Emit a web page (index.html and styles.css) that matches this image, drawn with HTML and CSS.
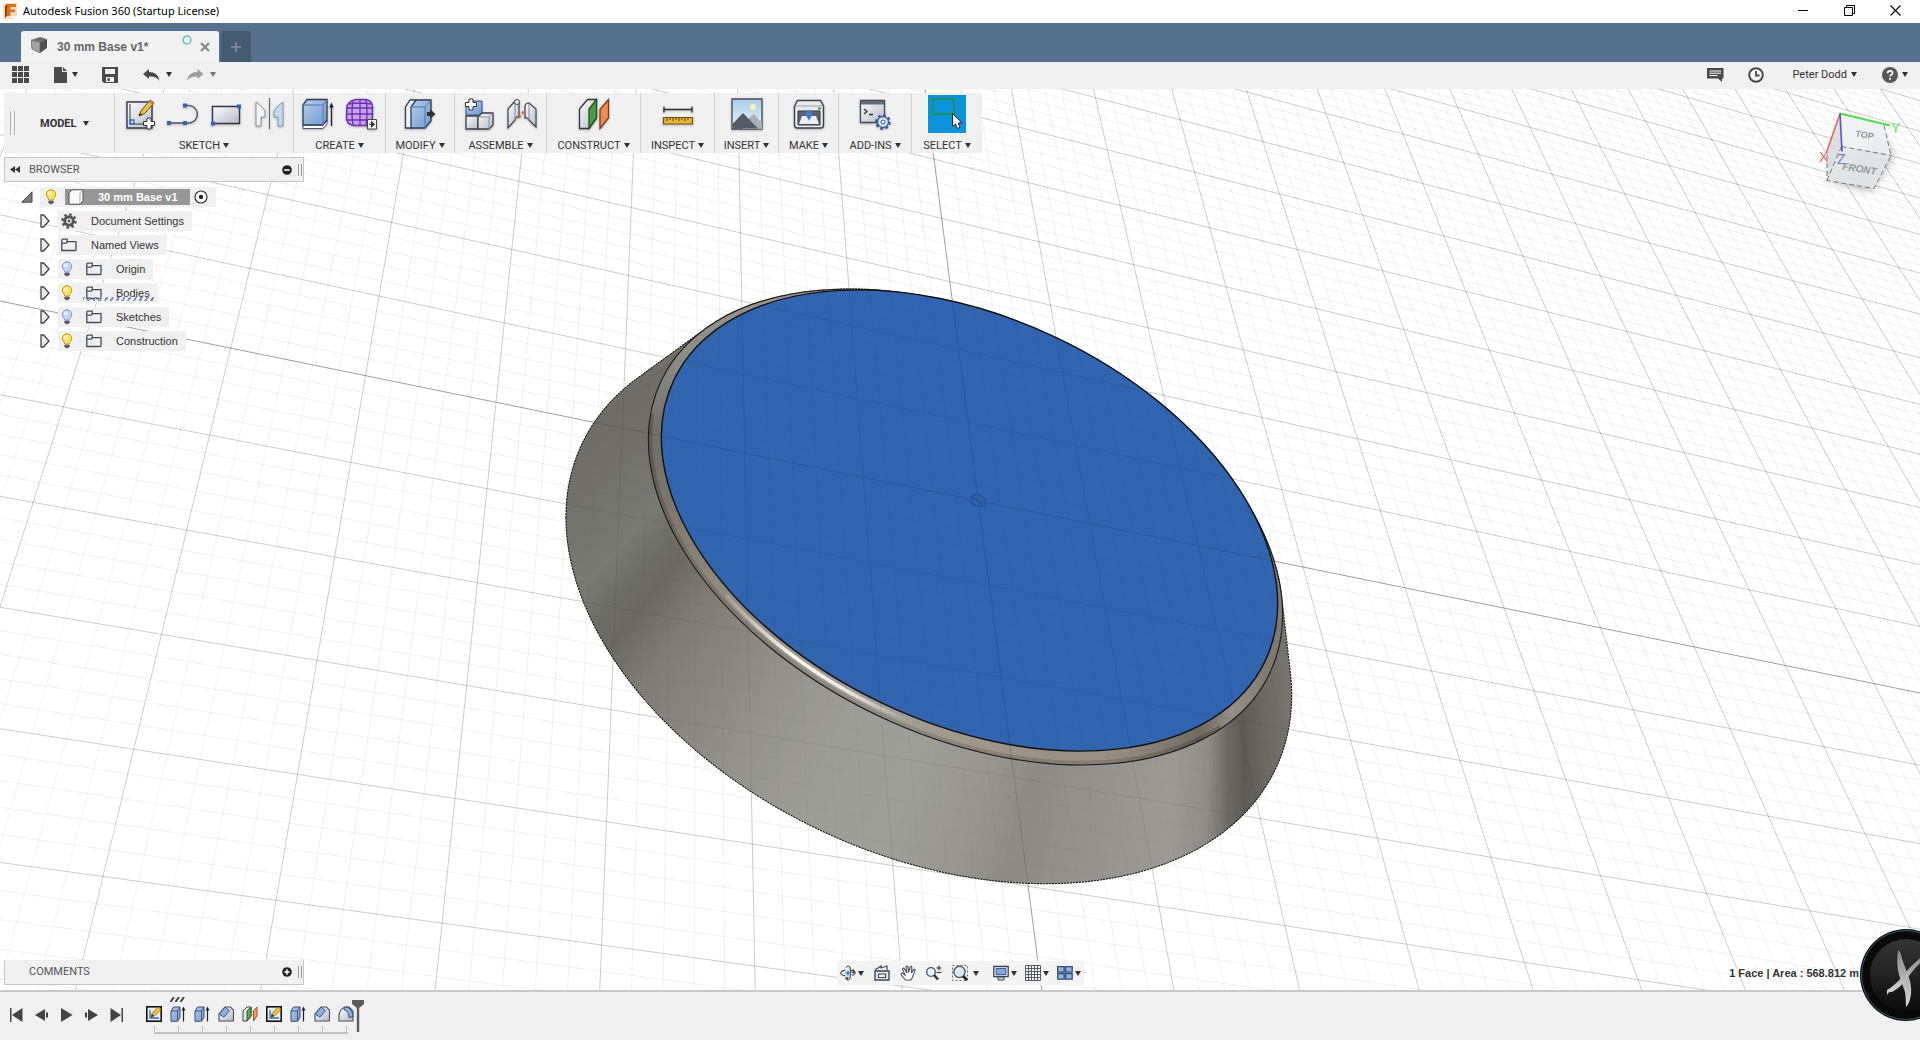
FILE: index.html
```html
<!DOCTYPE html>
<html lang="en">
<head>
<meta charset="utf-8">
<title>Autodesk Fusion 360 (Startup License)</title>
<link rel="stylesheet" href="styles.css">
</head>
<body>
<svg class="defs" aria-hidden="true">
  <defs>
    <linearGradient id="gBlue" x1="0" y1="0" x2="1" y2="1"><stop offset="0" stop-color="#b5cdec"/><stop offset="1" stop-color="#6f9bd1"/></linearGradient>
    <linearGradient id="gGrey" x1="0" y1="0" x2="1" y2="1"><stop offset="0" stop-color="#fdfdfe"/><stop offset="1" stop-color="#b4bac6"/></linearGradient>
    <linearGradient id="gSky" x1="0" y1="0" x2="0" y2="1"><stop offset="0" stop-color="#a9cdea"/><stop offset="1" stop-color="#eaf3f8"/></linearGradient>
    <linearGradient id="gDisc" x1="0" y1="0" x2="0" y2="1"><stop offset="0" stop-color="#343434"/><stop offset=".5" stop-color="#222"/><stop offset="1" stop-color="#0c0c0c"/></linearGradient>
    <linearGradient id="gX" x1="0" y1="0" x2="0" y2="1"><stop offset="0" stop-color="#8a8a8a"/><stop offset="1" stop-color="#d8d8d8"/></linearGradient>
    <symbol id="folder" viewBox="0 0 16 14"><path d="M.8 12.5V2.2q0-1 1-1h4.400v2.400H15v8.100q0 .8-.8.8z" fill="#eef0f4" stroke="#4a4d55" stroke-width="1.300"/><path d="M.8 5.200h4.600l1.200-1.600" fill="none" stroke="#4a4d55" stroke-width="1.200"/></symbol>
    <symbol id="bulbOn" viewBox="0 0 12 16"><path d="M6 .7a4.700 4.700 0 0 0-4.700 4.700C1.300 8 3.500 8.600 3.700 11h4.600C8.500 8.600 10.700 8 10.700 5.400A4.700 4.700 0 0 0 6 .7z" fill="#fbe25a" stroke="#b99a2c"/><circle cx="4.800" cy="4.600" r="1.800" fill="#fff6b8"/><path d="M3.800 12.200h4.400v1.600q-2.200 2.200-4.400 0z" fill="#5c6474" stroke="#3b4150" stroke-width=".8"/></symbol>
    <symbol id="bulbOff" viewBox="0 0 12 16"><path d="M6 .7a4.700 4.700 0 0 0-4.700 4.700C1.300 8 3.500 8.600 3.700 11h4.600C8.500 8.600 10.700 8 10.700 5.400A4.700 4.700 0 0 0 6 .7z" fill="#c5d6f2" stroke="#8499c4"/><circle cx="4.800" cy="4.600" r="1.800" fill="#edf3fd"/><path d="M3.800 12.200h4.400v1.600q-2.200 2.200-4.400 0z" fill="#5c6474" stroke="#3b4150" stroke-width=".8"/></symbol>
    <symbol id="twist" viewBox="0 0 10 14"><path d="M1 1h2.600L9 7l-5.400 6H1z" fill="#e9e9e9" stroke="#444" stroke-width="1.300"/></symbol>
    <symbol id="tSketch" viewBox="0 0 16 16"><rect x=".8" y=".8" width="14.400" height="14.400" fill="#e6f0fa" stroke="#111" stroke-width="1.600"/><path d="M4 4v8h9" fill="none" stroke="#3d6ea8" stroke-width="1.300"/><path d="M5 11l1-3.500 6-6.500 3 2.500-6.500 6.500z" fill="#f6c52e" stroke="#8a6a10" stroke-width=".8"/><path d="M5 11l1-3 2 2z" fill="#222"/></symbol>
    <symbol id="tExtrude" viewBox="0 0 16 16"><path d="M1 5l2.500-4H10v10.500L7.500 15.300H1z" fill="url(#gBlue)" stroke="#3f4f68"/><path d="M1 5h6.500L10 1M7.500 5v10" fill="none" stroke="#3f4f68" stroke-width=".9"/><path d="M13.500 15.500V3" stroke="#222" stroke-width="1.200"/><path d="M13.500 .5l2 4h-4z" fill="#222"/></symbol>
    <symbol id="tChamfer" viewBox="0 0 16 16"><path d="M1 15V8l6-7h5.500l3 3v11z" fill="url(#gGrey)" stroke="#4b4f5a" stroke-width="1.100"/><path d="M1.200 8L7 1.200l4.500 3.500L6 11z" fill="#8db2e2" stroke="#3c5376"/></symbol>
    <symbol id="tFillet" viewBox="0 0 16 16"><path d="M1 15V9q1-7 7-8h3l4 4v10z" fill="url(#gGrey)" stroke="#4b4f5a" stroke-width="1.100"/><path d="M6 1.200Q8 .5 10 1.500q5 3 5 9l-4 1q0-6-5-8z" fill="#8db2e2" stroke="#2f4566"/></symbol>
    <symbol id="tPlane" viewBox="0 0 16 16"><path d="M1 5l4-4h4v9l-4 5H1z" fill="#e4e7ec" stroke="#3d4350"/><path d="M5 5l4-4v9l-4 5z" fill="#5ea54e" stroke="#2d5a25"/><path d="M11.500 5l3.500-4v9l-3.500 5z" fill="#f29a63" stroke="#a2542a"/></symbol>
  </defs>
</svg>

<div class="app">
  <header class="titlebar">
    <svg class="app-icon" viewBox="0 0 14 16"><path d="M0 1l3-1h11v12l-3 4H0z" fill="#f9d9b8"/><path d="M4 1h9v3H7.500v2.500H12V9H7.500v4H4z" fill="#d9731f"/><path d="M4 1L2 3v12l2-2z" fill="#8a4210"/><path d="M8 13h4v2H7z" fill="#fff"/></svg>
    <h1 class="app-title">Autodesk Fusion 360 (Startup License)</h1>
    <div class="win-controls">
      <button type="button" aria-label="Minimize"><svg viewBox="0 0 11 11"><path d="M0 5.500h10" stroke="#000"/></svg></button>
      <button type="button" aria-label="Restore"><svg viewBox="0 0 11 11"><path d="M.5 2.500h8v8h-8zM2.500 2.500v-2h8v8h-2" fill="none" stroke="#000"/></svg></button>
      <button type="button" aria-label="Close"><svg viewBox="0 0 11 11"><path d="M.5.5l10 10m0-10l-10 10" stroke="#000" stroke-width="1.100"/></svg></button>
    </div>
  </header>

  <nav class="tabs" aria-label="Documents">
    <div class="tab">
      <svg class="tab-cube" viewBox="0 0 16 16"><path d="M0 3l9-3 7 2-7 3z" fill="#6d6d6d"/><path d="M0 3l9 2v11l-8-4z" fill="#a3a3a3"/><path d="M9 5l7-3v9l-7 5z" fill="#4f4f4f"/><path d="M0 3l9 2v11l-8-4z" fill="none" stroke="#666" stroke-width=".8"/></svg>
      <span class="tab-name">30 mm Base v1*</span>
      <svg class="tab-dot" viewBox="0 0 10 10"><circle cx="5" cy="5" r="4" fill="none" stroke="#5cc3b0" stroke-width="1.300"/></svg>
      <button type="button" class="tab-close" aria-label="Close tab"><svg viewBox="0 0 10 10"><path d="M1 1l8 8m0-8L1 9" stroke="#8b8b8b" stroke-width="2.400"/></svg></button>
    </div>
    <button type="button" class="tab-new" aria-label="New tab"><svg viewBox="0 0 12 12"><path d="M6 1v10M1 6h10" stroke="#8391a0" stroke-width="1.600"/></svg></button>
  </nav>

  <div class="quickbar">
    <div class="quick-left">
      <button type="button" aria-label="Data panel"><svg width="17" height="17" viewBox="0 0 17 17"><path d="M0 0h5v5H0zM6 0h5v5H6zM12 0h5v5h-5zM0 6h5v5H0zM6 6h5v5H6zM12 6h5v5h-5zM0 12h5v5H0zM6 12h5v5H6zM12 12h5v5h-5z" fill="#4a4a4a"/></svg></button>
      <button type="button" class="menu q-file" aria-label="File"><svg width="14" height="16" viewBox="0 0 14 16"><path d="M0 0h8v5h5v11H0z" fill="#4a4a4a"/><path d="M9 0l4 4H9z" fill="#4a4a4a"/></svg></button>
      <button type="button" class="q-save" aria-label="Save"><svg width="16" height="16" viewBox="0 0 16 16"><path d="M0 0h16v16H2l-2-2z" fill="#4a4a4a"/><path d="M3 2h10v5H3zM4 10h8v5H4z" fill="#f0f0f0"/><path d="M5.500 11h2.200v3H5.500z" fill="#4a4a4a"/></svg></button>
      <button type="button" class="menu q-undo" aria-label="Undo"><svg width="17" height="12" viewBox="0 0 17 12"><path d="M0 5l6-5v3q9 0 10.500 8.500Q13 7 6 7.500V10z" fill="#4a4a4a"/></svg></button>
      <button type="button" class="menu q-redo" aria-label="Redo"><svg width="17" height="12" viewBox="0 0 17 12"><path d="M16.500 5l-6-5v3Q1.500 3 0 11.500 3.500 7 10.500 7.500V10z" fill="#9c9c9c"/></svg></button>
    </div>
    <div class="quick-right">
      <button type="button" aria-label="Notifications"><svg width="17" height="14" viewBox="0 0 17 14"><path d="M0 0h16.500v10.500H15V14l-4-3.500H0z" fill="#4a4a4a"/><path d="M2.500 3h11.500M2.500 5.200h11.500M2.500 7.500h8" stroke="#fff" stroke-width="1"/></svg></button>
      <button type="button" class="q-clock" aria-label="Job status"><svg width="16" height="16" viewBox="0 0 16 16"><circle cx="8" cy="8" r="6.800" fill="#f7f7f7" stroke="#4a4a4a" stroke-width="2"/><path d="M8 4v4.500h3.500" fill="none" stroke="#4a4a4a" stroke-width="1.800"/></svg></button>
      <button type="button" class="menu q-user">Peter Dodd</button>
      <button type="button" class="menu q-help" aria-label="Help"><svg width="16" height="16" viewBox="0 0 16 16"><circle cx="8" cy="8" r="8" fill="#595959"/><path d="M5.600 6.200q0-2.400 2.500-2.400 2.400 0 2.400 2.100 0 1.200-1.300 2-1.100.6-1.100 1.700" fill="none" stroke="#fff" stroke-width="1.700"/><path d="M7.200 11h1.800v1.800H7.200z" fill="#fff"/></svg></button>
    </div>
  </div>

  <main class="viewport">
    <svg class="scene" viewBox="0 89 1920 902" preserveAspectRatio="xMidYMid slice" role="img" aria-label="Model view">
      <defs>
        <g id="grid"><path id="minor" class="g-minor"/><path id="major" class="g-major"/><path id="axes" class="g-axis"/></g>
        <clipPath id="solidClip"><path id="clipHull"/></clipPath>
      </defs>
      <use href="#grid"/>
      <path id="hull" fill="#77756e"/>
      <g id="wall"></g>
      <path id="hullEdge" class="edge dotted"/>
      <ellipse cx="965.500" cy="527.500" rx="337.600" ry="208" transform="rotate(25.800 965.500 527.500)" fill="#8f8d86"/>
      <g id="rim"></g>
      <ellipse cx="965.500" cy="527.500" rx="337.600" ry="208" transform="rotate(25.800 965.500 527.500)" class="edge"/>
      <ellipse cx="969.500" cy="521" rx="327.300" ry="202.500" transform="rotate(25.400 969.500 521)" fill="#3265af" stroke="#111" stroke-width="1.400"/>
      <g clip-path="url(#solidClip)" opacity=".34"><use href="#grid"/></g>
      <g fill="none" stroke="#28569c" stroke-width="2.500"><ellipse cx="978" cy="501" rx="7.500" ry="5.500" transform="rotate(20 978 501)"/><path d="M972 497l11 8"/></g>
      <g class="viewcube">
        <path d="M1828 181l43 10 22-34-12-24z" fill="#000" opacity=".3" filter="blur(5px)"/>
        <path d="M1840 114l44 12 7 30-50-9z" fill="#f0f1f3" opacity=".92"/>
        <path d="M1841.500 147l50 9-17 33-47-8z" fill="#e4e5e7" opacity=".95"/>
        <path d="M1840 114l1.500 33-14.500 34V153z" fill="#d8d9dc" opacity=".85"/>
        <path d="M1884 126l7 30-17 33-47-8v-26M1841.500 147l50 9M1841.500 147l-14.500 34" fill="none" stroke="#777" stroke-dasharray="5 3"/>
        <path d="M1840 114l50 12" stroke="#4be04b" stroke-width="2"/>
        <path d="M1840 114l-13.500 39" stroke="#e06a6a" stroke-width="1.600"/>
        <path d="M1840 114l2 38" stroke="#5656c8" stroke-width="1.600"/>
        <text transform="translate(1855 137) rotate(9)" class="cube-t">TOP</text>
        <text transform="translate(1842 170) rotate(9)" class="cube-f">FRONT</text>
        <text x="1891" y="133" class="ax ax-y">Y</text>
        <text x="1819" y="162" class="ax ax-x">X</text>
        <text x="1837" y="164" class="ax ax-z">Z</text>
      </g>
    </svg>

    <div class="overlay">
      <div class="top-left">
        <div class="ribbon">
          <div class="workspace"><i class="grip"></i><button type="button" class="menu ws-btn">MODEL</button></div>
          <section class="group g-sketch">
            <div class="icons">
              <svg viewBox="0 0 32 32"><path d="M3 4h25v26H3z" fill="url(#gGrey)" stroke="#333a46" stroke-width="1.400"/><path d="M6 6v20h18" fill="none" stroke="#333a46"/><path d="M6 22h4v4H6z" fill="none" stroke="#2d6fc0" stroke-width="1.300"/><path d="M15 18l2-5L26 2l4 3-9.500 10.500z" fill="#f4c33c" stroke="#5d4a1c"/><path d="M24.500 4l4 3L30 5l-4-3z" fill="#d77a45"/><path d="M15 18l1-3 2 2z" fill="#222"/><path d="M23 20h4v3.500h3.500v4H27V31h-4v-3.500h-3.500v-4H23z" fill="#fff" stroke="#333"/></svg>
              <svg viewBox="0 0 32 32"><path d="M2 25h21a8.700 8.700 0 0 0-3-17.500" fill="none" stroke="#4c5260" stroke-width="1.400"/><path d="M0 23h4v4H0zM16 23h4v4h-4zM16 5.500h4v4h-4z" fill="#3b5fc0"/></svg>
              <svg viewBox="0 0 32 32"><path d="M2.500 8.500h27v17h-27z" fill="url(#gGrey)" stroke="#333a46" stroke-width="1.400"/><path d="M1 23.500h4v4H1zM27 6.500h4v4h-4z" fill="#3b5fc0"/></svg>
              <svg viewBox="0 0 32 32"><path d="M16.500 0v31" stroke="#5a5f6a"/><path d="M3 4l5 4 4 5v6H8v9H3z" fill="#f1f2f4" stroke="#8b9099"/><path d="M30 4l-5 4-4 5v6h4v9h5z" fill="#c5d9ee" stroke="#7f96b3"/></svg>
            </div>
            <button type="button" class="menu label">SKETCH</button>
          </section>
          <section class="group g-create">
            <div class="icons">
              <svg viewBox="0 0 32 32"><path d="M1 27h20l4-5v4l-4 4.500H1z" fill="#fff" stroke="#50596a"/><path d="M1 7l4-5.500h20V22l-4 5H1z" fill="url(#gBlue)" stroke="#2f3d55" stroke-width="1.300"/><path d="M1 7h20l4-5.500M21 7v20" fill="none" stroke="#5577a5"/><path d="M29.500 28V7" stroke="#222" stroke-width="1.300"/><path d="M29.500 4.500l2.200 5h-4.400z" fill="#222"/></svg>
              <svg viewBox="0 0 32 32"><path d="M2 8q3-6 9-6.500h10q6 1 6.500 7v10q-1 6-6 9H9q-7-1-7.500-7z" fill="#c9a2ee" stroke="#6b2fb0" stroke-width="1.500"/><path d="M2 10h25M1.500 16h26M2 22h25M8 3q-2 12 0 24M15 1.500v26M21 1.500q2 13 0 26M4 6q10-2 22 0" fill="none" stroke="#6b2fb0" stroke-width="1.300"/><path d="M22.500 21.500h9v9.500h-9z" fill="#f3f3f3" stroke="#444"/><path d="M24 26.300h4M26.500 23.500l3 2.800-3 2.800z" stroke="#333" fill="#333"/></svg>
            </div>
            <button type="button" class="menu label">CREATE</button>
          </section>
          <section class="group g-modify">
            <div class="icons"><svg viewBox="0 0 32 32"><path d="M1.500 9L6 2h6v22l-4 6H1.500z" fill="#eef1f5" stroke="#39424f" stroke-width="1.300"/><path d="M7 9l5-7h15v21l-6 7H7z" fill="url(#gBlue)" stroke="#2f3d55" stroke-width="1.300"/><path d="M7 9h14l6-7M21 9v21" fill="none" stroke="#5577a5"/><path d="M23 14h3v-3l5.500 5-5.500 5v-3h-3z" fill="#333"/></svg></div>
            <button type="button" class="menu label">MODIFY</button>
          </section>
          <section class="group g-assemble">
            <div class="icons">
              <svg viewBox="0 0 32 32"><path d="M8 3h11v14H3V9z" fill="url(#gBlue)" stroke="#3d5480"/><path d="M3 18h12v13H3z" fill="url(#gGrey)" stroke="#3a404c" stroke-width="1.300"/><path d="M15 19l4-4h11v12l-4 4H15z" fill="url(#gGrey)" stroke="#3a404c" stroke-width="1.300"/><path d="M15 19h11l4-4M26 19v12" fill="none" stroke="#8a909c"/><path d="M6 1h4v3.500h3.500v4H10V12H6V8.500H2.500v-4H6z" fill="#fff" stroke="#333"/></svg>
              <svg viewBox="0 0 32 32"><path d="M2 11l7-8q4-1 4 3v13q-3-1-4 3l-7 8z" fill="url(#gGrey)" stroke="#3a404c" stroke-width="1.200"/><path d="M30 11l-7-6q-4 0-4 4v11q3-1 4 2l7 7z" fill="url(#gGrey)" stroke="#3a404c" stroke-width="1.200"/><path d="M9 4v19M23 6v16" stroke="#8a909c"/><circle cx="11" cy="4" r="2.500" fill="#eee" stroke="#3a404c"/><path d="M13 20l6-9" stroke="#e0722b" stroke-width="2" stroke-dasharray="3 2"/></svg>
            </div>
            <button type="button" class="menu label">ASSEMBLE</button>
          </section>
          <section class="group g-construct">
            <div class="icons"><svg viewBox="0 0 32 32"><path d="M1.500 11l8-9.500h9V20l-7.500 10.500H1.500z" fill="url(#gGrey)" stroke="#333a46" stroke-width="1.300"/><path d="M11 11l7.500-9.500V20L11 30.500z" fill="#4c9a48" stroke="#24511f" stroke-width="1.300"/><path d="M22 11.500l8.500-10V20L22 30.500z" fill="#f08b55" stroke="#7a3b1a" stroke-width="1.300"/></svg></div>
            <button type="button" class="menu label">CONSTRUCT</button>
          </section>
          <section class="group g-inspect">
            <div class="icons"><svg viewBox="0 0 32 32"><path d="M2 11.500h28M2 8.500v6M30 8.500v6" stroke="#2e2e2e" stroke-width="1.400"/><path d="M1.500 19.500h29v6.500h-29z" fill="#eab437" stroke="#6e5210" stroke-width="1.200"/><path d="M5 20v3M8 20v2M11 20v3M14 20v2M17 20v3M20 20v2M23 20v3M26 20v2" stroke="#5f4710"/></svg></div>
            <button type="button" class="menu label">INSPECT</button>
          </section>
          <section class="group g-insert">
            <div class="icons"><svg viewBox="0 0 32 32"><path d="M1 1h30v30H1z" fill="url(#gSky)" stroke="#414a58" stroke-width="1.300"/><circle cx="22" cy="9" r="3" fill="#fff3a8"/><path d="M12 25l11-9 8 9v6H12z" fill="#a9afb9"/><path d="M1.500 26L12 15l15 15.500H1.500z" fill="#555b66"/></svg></div>
            <button type="button" class="menu label">INSERT</button>
          </section>
          <section class="group g-make">
            <div class="icons"><svg viewBox="0 0 32 32"><path d="M1.500 8l3-5.500h23l3 5.500v19q0 3-3 3h-23q-3 0-3-3z" fill="#e8eaed" stroke="#3a3f48" stroke-width="1.400"/><path d="M1.500 8h29" stroke="#9aa0aa"/><path d="M5 13h22v14H5z" fill="#5d636e" stroke="#33373f"/><path d="M9 18h14l3 8H6z" fill="#e9edf2"/><path d="M13 12.500h6v5l-3 5-3-5z" fill="#3c79cf"/><path d="M25 9.500h3v2h-3z" fill="#2fa04b"/></svg></div>
            <button type="button" class="menu label">MAKE</button>
          </section>
          <section class="group g-addins">
            <div class="icons"><svg viewBox="0 0 32 32"><path d="M1.500 2.500h24v22h-24z" fill="url(#gGrey)" stroke="#444b58" stroke-width="1.300"/><path d="M2 3h23v3.500H2z" fill="#666d79"/><path d="M5 11l3 2.500L5 16M10 16.500h4" fill="none" stroke="#333" stroke-width="1.300"/><circle cx="24" cy="24" r="6.800" fill="none" stroke="#34568f" stroke-width="2" stroke-dasharray="2.700 2.640"/><circle cx="24" cy="24" r="5.500" fill="#d7e3f5" stroke="#34568f" stroke-width="1.300"/><circle cx="24" cy="24" r="2" fill="#fff" stroke="#34568f"/></svg></div>
            <button type="button" class="menu label">ADD-INS</button>
          </section>
          <section class="group g-select">
            <div class="icons"><svg class="active" viewBox="0 0 38 38"><path d="M5 4h21v15H5z" fill="none" stroke="#2b8f2f" stroke-width="1.400"/><path d="M24.500 18.500v13l3-2.600 2 4.600 2.600-1.200-2-4.400h4z" fill="#fff" stroke="#222"/></svg></div>
            <button type="button" class="menu label">SELECT</button>
          </section>
        </div>

        <div class="panel-head">
          <svg class="rew" viewBox="0 0 10 7"><path d="M5 0v7L0 3.500zM10 0v7L5 3.500z" fill="#333"/></svg>
          <h2>BROWSER</h2>
          <button type="button" aria-label="Collapse"><svg viewBox="0 0 10 10"><circle cx="5" cy="5" r="4.800" fill="#222"/><path d="M2.300 5h5.400" stroke="#fff" stroke-width="1.600"/></svg></button>
          <i class="bar2"></i>
        </div>

        <ul class="tree">
          <li class="root"><svg class="open" viewBox="0 0 12 12"><path d="M11 .8v10.400H.8z" fill="#7d7d7d" stroke="#444"/></svg>
            <div class="node"><svg class="bulb"><use href="#bulbOn"/></svg><span class="doc"><svg class="cube" viewBox="0 0 16 16"><path d="M1 4l3-3.200h11V12l-3 3.200H1z" fill="#fafafa" stroke="#555"/><path d="M12 4v11M12 4l3-3" stroke="#aaa" fill="none"/></svg>30 mm Base v1</span><svg class="radio" viewBox="0 0 14 14"><circle cx="7" cy="7" r="6" fill="#fff" stroke="#333" stroke-width="1.200"/><circle cx="7" cy="7" r="2.200" fill="#222"/></svg></div></li>
          <li><svg class="twist"><use href="#twist"/></svg><div class="node"><svg class="gear" viewBox="0 0 16 16"><circle cx="8" cy="8" r="4.300" fill="none" stroke="#555" stroke-width="3"/><circle cx="8" cy="8" r="6.600" fill="none" stroke="#555" stroke-width="2.400" stroke-dasharray="2.600 2.580"/><circle cx="8" cy="8" r="1.400" fill="#555"/></svg><span class="name">Document Settings</span></div></li>
          <li><svg class="twist"><use href="#twist"/></svg><div class="node"><svg class="fold"><use href="#folder"/></svg><span class="name">Named Views</span></div></li>
          <li><svg class="twist"><use href="#twist"/></svg><div class="node"><svg class="bulb"><use href="#bulbOff"/></svg><svg class="fold"><use href="#folder"/></svg><span class="name">Origin</span></div></li>
          <li><svg class="twist"><use href="#twist"/></svg><div class="node marked"><svg class="bulb"><use href="#bulbOn"/></svg><svg class="fold"><use href="#folder"/></svg><span class="name">Bodies</span></div></li>
          <li><svg class="twist"><use href="#twist"/></svg><div class="node"><svg class="bulb"><use href="#bulbOff"/></svg><svg class="fold"><use href="#folder"/></svg><span class="name">Sketches</span></div></li>
          <li><svg class="twist"><use href="#twist"/></svg><div class="node"><svg class="bulb"><use href="#bulbOn"/></svg><svg class="fold"><use href="#folder"/></svg><span class="name">Construction</span></div></li>
        </ul>
      </div>

      <div class="bottom">
        <div class="panel-head comments">
          <h2>COMMENTS</h2>
          <button type="button" aria-label="Expand"><svg viewBox="0 0 10 10"><circle cx="5" cy="5" r="4.800" fill="#222"/><path d="M2.300 5h5.400M5 2.300v5.400" stroke="#fff" stroke-width="1.500"/></svg></button>
          <i class="bar2"></i>
        </div>
        <div class="navbar">
          <button type="button" class="menu" aria-label="Orbit"><svg viewBox="0 0 16 16"><path d="M6 2.500q2-3 4 0 1.500 5.500 0 11-2 3-4 0" fill="none" stroke="#4c525e" stroke-width="1.200"/><path d="M5.500 5.200Q1 6 .8 8q.2 2.200 4.700 2.800M10 5.200q4.500.8 5 2.800-.5 1.800-3 2.500" fill="none" stroke="#4c525e" stroke-width="1.200"/><path d="M13 3.500l3 4-4 1zM4.500 13l3.500 2.500.5-4z" fill="#4c525e"/><path d="M8 5.500v5M5.500 8h5" stroke="#3a78c8" stroke-width="1.500"/></svg></button>
          <button type="button" aria-label="Look at"><svg viewBox="0 0 16 16"><path d="M1 6h14v9H1z" fill="#e7e9ed" stroke="#3f4450" stroke-width="1.400"/><path d="M4.500 9h7v3.500h-7z" fill="#fff" stroke="#3f4450" stroke-width="1.200"/><path d="M1 5l6-4v2l6-2v4" fill="none" stroke="#3f4450" stroke-width="1.200"/></svg></button>
          <button type="button" aria-label="Pan"><svg viewBox="0 0 16 16"><path d="M5.500 15L1 9.500Q1 7.500 3 8.500L5 10 2.500 4Q3.500 2 4.500 4L7 8 6 2Q7 0 8 2l.8 5.500L10 2q1.200-1.300 1.800.2L11.500 8l2-3.500q1.500-.8 1.500.9L12.500 12 11 15z" fill="#fff" stroke="#4a4f5a" stroke-width="1.100"/></svg></button>
          <button type="button" aria-label="Zoom"><svg viewBox="0 0 16 16"><circle cx="5" cy="7" r="4.300" fill="#e9f2f5" stroke="#4a4f5a" stroke-width="1.300"/><path d="M8 10l4 4.500" stroke="#333" stroke-width="2.600"/><path d="M10.500 3h5M13 .8v4.600M10.500 7.500h5" stroke="#333" stroke-width="1.200"/></svg></button>
          <button type="button" class="menu n-fit" aria-label="Fit"><svg viewBox="0 0 16 16"><path d="M.5.5h15v15H.5z" fill="none" stroke="#666" stroke-dasharray="2 2"/><circle cx="7.500" cy="7" r="5.600" fill="#dcedf0" stroke="#4a4f5a" stroke-width="1.300"/><path d="M11 11l4 4" stroke="#222" stroke-width="2.600"/></svg></button>
          <button type="button" class="menu n-disp" aria-label="Display settings"><svg viewBox="0 0 16 16"><path d="M.8 1.500h14.400v10H.8z" fill="#fff" stroke="#3b4352" stroke-width="1.300"/><path d="M3 3.500h10v6H3z" fill="#7fa8e0" stroke="#3f5f95"/><path d="M5 12h6v3H5z" fill="#cfd5de" stroke="#3b4352"/></svg></button>
          <button type="button" class="menu" aria-label="Grid and snaps"><svg viewBox="0 0 16 16"><path d="M.5.5h15v15H.5zM3.500.5v15M6.500.5v15M9.500.5v15M12.500.5v15M.5 3.500h15M.5 6.500h15M.5 9.500h15M.5 12.500h15" fill="#f5f5f5" stroke="#575c66"/></svg></button>
          <button type="button" class="menu" aria-label="Viewports"><svg viewBox="0 0 16 16"><path d="M.7 1.700h6.500v5.500H.7zM8.700 1.700h6.500v5.500H8.700zM.7 8.700h6.500v5.500H.7zM8.700 8.700h6.500v5.500H8.700z" fill="#8fb4e6" stroke="#364c74" stroke-width="1.300"/></svg></button>
        </div>
        <p class="status">1 Face | Area : 568.812 m</p>
      </div>
    </div>
  </main>

  <footer class="timeline">
    <div class="player">
      <button type="button" aria-label="To start"><svg viewBox="0 0 13 14"><path d="M0 0h1.500v14H0zM12.500 0v14L2 7z" fill="#444"/></svg></button>
      <button type="button" aria-label="Step back"><svg viewBox="0 0 13 14"><path d="M10 1v12L0 7zM11 4.500h2v5h-2z" fill="#444"/></svg></button>
      <button type="button" aria-label="Play"><svg viewBox="0 0 13 14"><path d="M1 0l11.500 7L1 14z" fill="#444"/></svg></button>
      <button type="button" aria-label="Step forward"><svg viewBox="0 0 13 14"><path d="M3 1v12l10-6zM0 4.500h2v5H0z" fill="#444"/></svg></button>
      <button type="button" aria-label="To end"><svg viewBox="0 0 13 14"><path d="M11.500 0H13v14h-1.500zM.5 0v14L11 7z" fill="#444"/></svg></button>
    </div>
    <div class="history">
      <svg class="hatch" viewBox="0 0 15 5"><path d="M.5 5l3.500-5M5.500 5L9 0M10.500 5L14 0" stroke="#444" stroke-width="2"/></svg>
      <ol class="features">
        <li><svg><use href="#tSketch"/></svg></li>
        <li><svg><use href="#tExtrude"/></svg></li>
        <li><svg><use href="#tExtrude"/></svg></li>
        <li><svg><use href="#tChamfer"/></svg></li>
        <li><svg><use href="#tPlane"/></svg></li>
        <li><svg><use href="#tSketch"/></svg></li>
        <li><svg><use href="#tExtrude"/></svg></li>
        <li><svg><use href="#tChamfer"/></svg></li>
        <li><svg><use href="#tFillet"/></svg></li>
      </ol>
      <svg class="marker" viewBox="0 0 12 32"><path d="M0 0h12v4L7.200 8v24H4.800V8L0 4z" fill="#5c5c5c"/></svg>
    </div>
  </footer>

  <svg class="badge" viewBox="0 0 92 92" aria-hidden="true"><circle cx="46" cy="46" r="46" fill="#0a0a0a"/><circle cx="46" cy="46" r="44.500" fill="none" stroke="#3b5b68" stroke-width="1"/><circle cx="46" cy="46" r="36" fill="url(#gDisc)"/><path d="M38 21q3 2 4 9l6 16q4 9 3 19-1 9-5 13 0-8-1-15l-6-17q-3-12-1-25z" fill="url(#gX)"/><path d="M64 26q-14 11-22 22-8 9-15 13l0 5q2-4 5-3 9-5 15-13 8-13 19-20z" fill="url(#gX)"/></svg>
</div>
<script src="scene.js"></script>
</body>
</html>
```
FILE: scene.js
```js
// Projection of the ground plane (grid units) to scene coordinates.
const H = [128.117, -27.178, 978.259, 30.752, 62.17, 501.288, 0.015249, -0.038577];
function project(u, v) {
  const w = H[6] * u + H[7] * v + 1;
  return ((H[0] * u + H[1] * v + H[2]) / w).toFixed(1) + ' ' + ((H[3] * u + H[4] * v + H[5]) / w).toFixed(1);
}

// Ground grid: five minor cells to each major one.
const U = [-16, 26], V = [-24, 9], paths = { minor: '', major: '', axes: '' };
function addLine(index, d) {
  paths[index === 0 ? 'axes' : index % 5 === 0 ? 'major' : 'minor'] += d;
}
for (let i = U[0] * 5; i <= U[1] * 5; i++) addLine(i, 'M' + project(i / 5, V[0]) + 'L' + project(i / 5, V[1]));
for (let j = V[0] * 5; j <= V[1] * 5; j++) addLine(j, 'M' + project(U[0], j / 5) + 'L' + project(U[1], j / 5));
for (const id in paths) document.getElementById(id).setAttribute('d', paths[id]);

// Rings of the solid.
const bottom = { cx: 928.8, cy: 606.8, rx: 383, ry: 248.9, rot: 24.9 };
const outer = { cx: 965.5, cy: 527.5, rx: 337.6, ry: 208, rot: 25.8 };
const inner = { cx: 969.5, cy: 521, rx: 327.3, ry: 202.5, rot: 25.4 };
function at(e, deg) {
  const t = deg * Math.PI / 180, r = e.rot * Math.PI / 180;
  const a = e.rx * Math.cos(t), b = e.ry * Math.sin(t);
  return [e.cx + a * Math.cos(r) - b * Math.sin(r), e.cy + a * Math.sin(r) + b * Math.cos(r)];
}

// Silhouette: convex hull of the bottom ring and the outer rim.
function half(points) {
  const out = [];
  for (const p of points) {
    while (out.length > 1) {
      const a = out[out.length - 2], b = out[out.length - 1];
      if ((b[0] - a[0]) * (p[1] - a[1]) - (b[1] - a[1]) * (p[0] - a[0]) > 0) break;
      out.pop();
    }
    out.push(p);
  }
  return out.slice(0, -1);
}
const ring = [];
for (let t = 0; t < 360; t++) ring.push(at(bottom, t), at(outer, t));
ring.sort((a, b) => a[0] - b[0] || a[1] - b[1]);
const hull = half(ring).concat(half(ring.slice().reverse()));
const hullPath = 'M' + hull.map(p => p[0].toFixed(1) + ' ' + p[1].toFixed(1)).join('L') + 'z';
for (const id of ['hull', 'hullEdge', 'clipHull']) document.getElementById(id).setAttribute('d', hullPath);

function shade(stops, t) {
  let i = 0;
  while (i < stops.length - 2 && t > stops[i + 1][0]) i++;
  const [t0, c0] = stops[i], [t1, c1] = stops[i + 1];
  const k = Math.min(1, Math.max(0, (t - t0) / (t1 - t0)));
  return 'rgb(' + c0.map((c, n) => Math.round(c + (c1[n] - c) * k)).join(',') + ')';
}
function band(id, a, b, from, to, stops, k0, k1) {
  const mix = (t, k) => { const p = at(a, t), q = at(b, t); return (p[0] + (q[0] - p[0]) * k).toFixed(2) + ' ' + (p[1] + (q[1] - p[1]) * k).toFixed(2); };
  let out = '';
  for (let t = from; t < to; t++) {
    const c = shade(stops, t);
    out += '<path d="M' + mix(t, k0) + 'L' + mix(t + 1.3, k0) + 'L' + mix(t + 1.3, k1) + 'L' + mix(t, k1) + 'z" fill="' + c + '"/>';
  }
  document.getElementById(id).insertAdjacentHTML('beforeend', out);
}
band('wall', bottom, outer, -16, 206, [
  [-16, [119, 117, 110]], [-8, [118, 115, 108]], [4, [108, 105, 98]], [12, [92, 91, 86]], [17, [106, 105, 100]], [23, [142, 141, 135]],
  [32, [155, 154, 148]], [48, [148, 146, 140]], [60, [141, 139, 133]], [68, [150, 149, 144]], [80, [159, 159, 153]],
  [94, [157, 157, 152]], [106, [147, 146, 140]], [116, [138, 135, 128]], [126, [127, 124, 117]], [135, [106, 105, 99]],
  [141, [111, 111, 105]], [147, [120, 122, 115]], [155, [116, 117, 110]], [170, [112, 112, 105]], [185, [110, 109, 102]], [206, [119, 117, 110]]
], 0, 1);
const rimStops = [
  [0, [125, 121, 112]], [15, [150, 145, 134]], [25, [112, 106, 97]], [45, [150, 142, 130]], [70, [158, 150, 138]], [95, [165, 160, 150]],
  [120, [150, 142, 132]], [145, [125, 119, 110]], [165, [112, 111, 104]], [185, [140, 140, 134]], [215, [150, 149, 142]], [360, [125, 121, 112]]
];
band('rim', outer, inner, 0, 360, rimStops, 0, 1);
band('rim', outer, inner, 20, 170, rimStops.map(s => [s[0], s[1].map(c => c - 20)]), 0, 0.3);
band('rim', outer, inner, 84, 124, [[84, [165, 160, 150]], [96, [235, 232, 226]], [107, [250, 249, 246]], [124, [160, 152, 142]]], 0.45, 0.72);
```
FILE: styles.css
```css
* { box-sizing: border-box; }
html, body { margin: 0; }
body {
  font-family: Roboto, "Liberation Sans", sans-serif;
  font-size: 11px;
  color: #333;
  background: #f0f0f0;
}
h1, h2, p, ul, ol { margin: 0; padding: 0; font-weight: normal; }
ul, ol { list-style: none; }
svg { display: block; flex: none; }
button {
  display: flex;
  align-items: center;
  justify-content: center;
  margin: 0;
  padding: 0;
  border: 0;
  background: none;
  font: inherit;
  color: inherit;
}
.defs { position: absolute; width: 0; height: 0; }
.menu { gap: 4px; }
.menu::after {
  content: "";
  border: 3px solid transparent;
  border-top: 5px solid #333;
  border-bottom: 0;
}

.app {
  position: relative;
  display: grid;
  grid-template-rows: auto auto auto 1fr auto;
  min-height: 100vh;
  overflow: hidden;
}

/* title bar */
.titlebar { display: flex; align-items: center; height: 23px; padding: 0 2px 2px 3px; background: #fff; }
.app-icon { width: 14px; height: 16px; }
.app-title { margin-left: 6px; font: 11px/20px "Noto Sans", sans-serif; color: #000; }
.win-controls { display: flex; margin-left: auto; }
.win-controls button { width: 46px; height: 20px; }
.win-controls svg { width: 11px; height: 11px; }

/* document tabs */
.tabs { display: flex; align-items: flex-end; gap: 2px; height: 39px; padding-left: 21px; background: #55718b; }
.tab {
  display: flex;
  align-items: center;
  width: 198px;
  height: 31px;
  padding: 0 9px 0 10px;
  border-radius: 3px 3px 0 0;
  background: #f2f2f2;
}
.tab-cube { width: 16px; height: 16px; margin-bottom: 4px; }
.tab-name { margin-left: 10px; font: bold 12px/16px "Liberation Sans", sans-serif; color: #666; }
.tab-dot { width: 10px; height: 10px; margin: 0 8px 14px auto; }
.tab-close svg { width: 10px; height: 10px; }
.tab-new { width: 30px; height: 31px; border-radius: 3px 3px 0 0; background: #455b70; }
.tab-new svg { width: 12px; height: 12px; }

/* quick access bar */
.quickbar { display: flex; justify-content: space-between; height: 27px; padding: 0 12px 2px; background: #f0f0f0; }
.quick-left, .quick-right { display: flex; align-items: center; }
.q-file { margin-left: 25px; }
.q-save { margin-left: 24px; }
.q-undo { margin-left: 25px; }
.q-undo.menu, .q-redo.menu { gap: 6px; }
.q-redo { margin-left: 15px; }
.q-redo::after { border-top-color: #777; }
.q-clock { margin-left: 24px; }
.q-user { margin-left: 29px; }
.q-help { margin-left: 25px; }

/* viewport */
.viewport { position: relative; display: grid; min-height: 480px; background: #fff; }
.scene { position: absolute; inset: 0; width: 100%; height: 100%; }
.g-minor, .g-major, .g-axis { fill: none; stroke: #000; stroke-width: 1; }
.g-minor { stroke-opacity: .06; }
.g-major { stroke-opacity: .2; }
.g-axis { stroke-opacity: .38; }
.edge { fill: none; stroke: #1a1a1a; stroke-width: 1.1; }
.dotted { stroke-dasharray: 2 1; }
.ax { font: 14px "Liberation Sans", sans-serif; }
.ax-x { fill: #e06a6a; }
.ax-y { fill: #6be36b; }
.ax-z { fill: #7676dc; }
.cube-t, .cube-f { font: bold 9px "Liberation Sans", sans-serif; fill: #97979b; }
.cube-f { font-size: 10px; font-style: italic; }

.overlay { position: relative; display: flex; flex-direction: column; justify-content: space-between; padding: 4px 0 5px 4px; }
.top-left { display: flex; flex-direction: column; align-items: flex-start; }

.ribbon { display: flex; height: 60px; background: #f0f0f0; }
.workspace { display: flex; align-items: center; width: 110px; padding-left: 6px; }
.grip { width: 5px; height: 24px; border: solid #b4b4b4; border-width: 0 1px; }
.ws-btn { margin-left: 25px; font-weight: bold; }
.ws-btn.menu { gap: 6px; }
.group {
  display: flex;
  flex-direction: column;
  align-items: center;
  justify-content: space-between;
  border-left: 1px solid #d2d2d2;
}
.icons { display: flex; align-items: center; gap: 11px; height: 41px; }
.icons svg { width: 32px; height: 32px; filter: drop-shadow(0 1px 1px rgba(0, 0, 0, .25)); }
.icons .active { width: 38px; height: 38px; background: #0b93dc; filter: none; }
.label { height: 15px; }
.label.menu { gap: 3px; }
.g-sketch { width: 179px; }
.g-create { width: 92px; }
.g-modify { width: 69px; }
.g-assemble { width: 92px; }
.g-construct { width: 94px; }
.g-inspect { width: 74px; }
.g-insert { width: 64px; }
.g-make { width: 60px; }
.g-addins { width: 73px; }
.g-select { width: 71px; }

.panel-head {
  display: flex;
  align-items: center;
  width: 300px;
  height: 25px;
  margin-top: 4px;
  padding: 0 1px 0 5px;
  border: 1px solid #c6c6c6;
  background: #f0f0f0;
}
.panel-head h2 { margin-left: 9px; font-size: 11px; line-height: 16px; color: #555; }
.panel-head button { margin-left: auto; }
.panel-head button svg { width: 10px; height: 10px; }
.rew { width: 10px; height: 7px; }
.bar2 { width: 4px; height: 12px; margin-left: 6px; border: solid #999; border-width: 0 1px; }

.tree { margin-top: 3px; font: 11px/20px "Liberation Sans", sans-serif; color: #333; }
.tree li { display: flex; align-items: center; height: 24px; padding-left: 36px; }
.tree .root { padding-left: 17px; }
.node { display: flex; align-items: center; height: 20px; margin-left: 8px; padding: 0 8px 0 3px; background: #f0f0f0; }
.root .node { margin-left: 7px; padding: 0 8px 0 5px; }
.open { width: 12px; height: 12px; }
.twist { width: 10px; height: 14px; }
.bulb { width: 12px; height: 16px; }
.root .bulb { margin-right: 8px; }
.node > .bulb + .fold { margin-left: 13px; }
.fold { width: 16px; height: 14px; }
.gear { width: 16px; height: 16px; }
.name { margin-left: 14px; }
.doc { display: flex; align-items: center; gap: 14px; height: 16px; padding: 0 12px 0 3px; background: #969696; color: #fff; font-weight: bold; }
.cube { width: 16px; height: 16px; }
.radio { width: 14px; height: 14px; margin-left: 4px; }
.marked { position: relative; }
.marked::after {
  content: "";
  position: absolute;
  right: 2px;
  bottom: 2px;
  left: 25px;
  height: 4px;
  background: repeating-linear-gradient(120deg, #8090b4 0 2px, transparent 2px 5px);
}

.bottom { display: grid; grid-template-columns: 1fr auto 1fr; align-items: end; margin-left: -4px; }
.comments { margin: 0 0 0 4px; border-width: 0 1px 1px; }
.comments h2 { margin-left: 19px; }
.navbar { display: flex; align-items: center; gap: 10px; height: 24px; padding: 0 3px; background: #f3f3f3; }
.navbar svg { width: 16px; height: 16px; }
.navbar .menu { gap: 2px; }
.navbar .menu + .menu { margin-left: -2px; }
.navbar .n-fit.menu { gap: 5px; }
.navbar .n-fit + .n-disp { margin-left: 4px; }
.status { justify-self: end; padding: 0 61px 4px 0; font: bold 11px/16px "Liberation Sans", sans-serif; color: #333; }

/* timeline */
.timeline { display: flex; height: 50px; padding-left: 10px; border-top: 2px solid #c8c8c8; background: #f0f0f0; }
.player { display: flex; align-items: center; gap: 12px; height: 46px; }
.player svg { width: 13px; height: 14px; }
.history { position: relative; display: flex; margin-left: 23px; padding-top: 14px; }
.features { display: flex; gap: 8px; height: 27px; }
.features li {
  position: relative;
  width: 16px;
}
.features li::after {
  content: "";
  position: absolute;
  top: 20px;
  left: 8px;
  width: 24px;
  height: 6px;
  border: solid #c0c0c0;
  border-width: 0 0 2px 1px;
}
.features li:last-child::after { width: 1px; }
.features svg { width: 16px; height: 16px; }
.hatch { position: absolute; top: 5px; left: 24px; width: 15px; height: 5px; }
.marker { position: absolute; top: 8px; right: -10px; width: 12px; height: 32px; }

.badge { position: absolute; right: -32px; bottom: 19px; width: 92px; height: 92px; }
```
